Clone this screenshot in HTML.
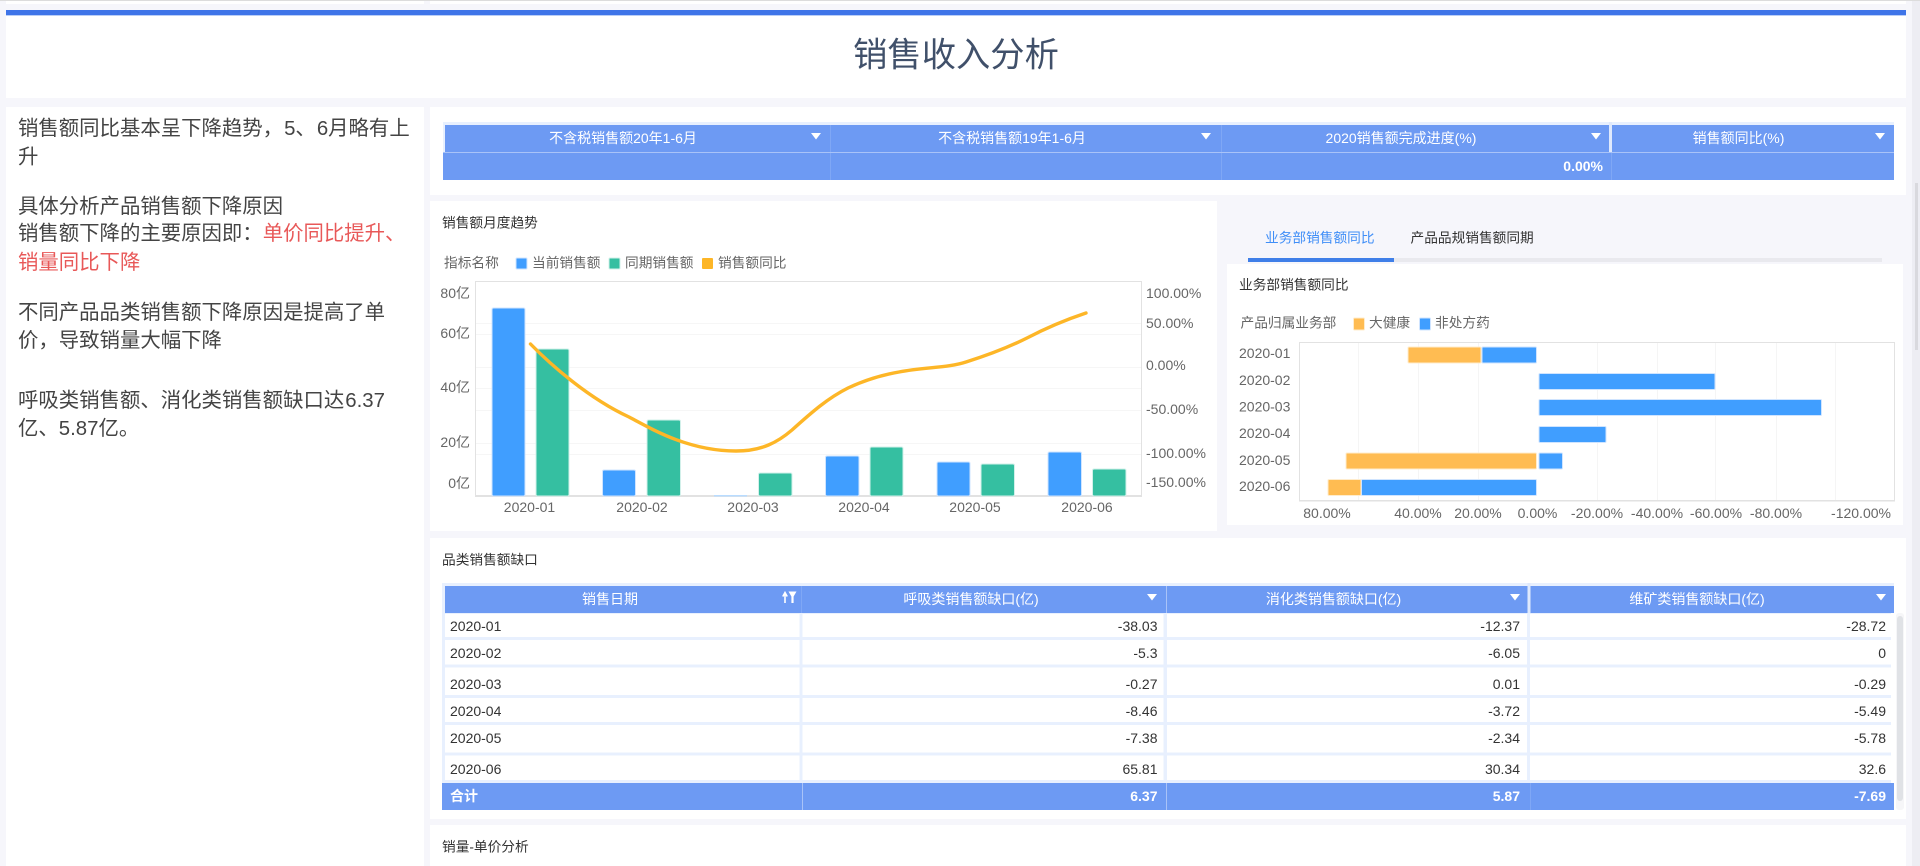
<!DOCTYPE html>
<html lang="zh-CN"><head><meta charset="utf-8"><title>销售收入分析</title>
<style>
html,body{margin:0;padding:0;width:1920px;height:866px;overflow:hidden;background:#f6f6fb}
svg{display:block;position:absolute;left:0;top:0}
text{font-family:"Liberation Sans","Noto Sans CJK SC",sans-serif;font-size:14px;dominant-baseline:central}
.ax{fill:#666}.t{fill:#333}.w{fill:#fff}.wb{fill:#fff;font-weight:700}
.m{text-anchor:middle}.e{text-anchor:end}
.c{font-size:13.7px}
.l{font-size:20.4px;fill:#444}.r{fill:#e85858}
.bb{fill:#409eff;stroke:#cfe4ff;stroke-width:1}
.bg{fill:#35bfa1;stroke:#d2f0ea;stroke-width:1}
.bo{fill:#ffbc52;stroke:#ffeccc;stroke-width:1}
</style></head><body>
<svg width="1920" height="866" viewBox="0 0 1920 866" xmlns="http://www.w3.org/2000/svg">
<rect width="1920" height="866" fill="#f6f6fb"/>
<rect x="1912" y="0" width="8" height="866" fill="#ededf3"/>
<rect x="1915" y="183" width="3" height="167" fill="#d9d9de"/>
<rect x="0" y="0" width="1920" height="1" fill="#dcdcdc"/>
<rect x="6" y="1" width="418" height="3" fill="#fff"/><rect x="430" y="1" width="1476" height="3" fill="#fff"/>

<!-- Title -->
<rect x="6" y="10" width="1900" height="88" fill="#fff"/>
<rect x="6" y="10" width="1900" height="5" fill="#3e74e8"/>
<rect x="6" y="15" width="1900" height="1" fill="#b9cdf6"/>
<text x="956" y="55.5" class="m" style="font-size:34.3px;fill:#40506a">销售收入分析</text>

<!-- Left panel -->
<rect x="6" y="107" width="418" height="759" fill="#fff"/>
<text x="18" y="129" class="l">销售额同比基本呈下降趋势，<tspan dx="1">5、</tspan><tspan dx="1">6月略有上</tspan></text>
<text x="18" y="157.5" class="l">升</text>
<text x="18" y="207" class="l">具体分析产品销售额下降原因</text>
<text x="18" y="234" class="l">销售额下降的主要原因即：<tspan class="r">单价同比提升、</tspan></text>
<text x="18" y="263" class="l r">销量同比下降</text>
<text x="18" y="313" class="l">不同产品品类销售额下降原因是提高了单</text>
<text x="18" y="341" class="l">价，导致销量大幅下降</text>
<text x="18" y="401" class="l">呼吸类销售额、消化类销售额缺口达<tspan dx="1">6.37</tspan></text>
<text x="18" y="429" class="l">亿、5.87亿。</text>

<!-- Summary table -->
<rect x="430" y="107" width="1476" height="88" fill="#fff"/>
<rect x="443" y="122" width="1451" height="3" fill="#e8f0fe"/>
<rect x="445" y="125" width="1449" height="27" fill="#6d9af3"/>
<rect x="443" y="125" width="2" height="27" fill="#e8f0fe"/>
<rect x="443" y="153" width="1451" height="27" fill="#6d9af3"/>
<rect x="443" y="152" width="1451" height="1" fill="#a9c3f8"/>
<rect x="830" y="125" width="1" height="27" fill="#7fa7f5"/><rect x="830" y="153" width="1" height="27" fill="#7fa7f5"/>
<rect x="1221" y="125" width="1" height="27" fill="#7fa7f5"/><rect x="1221" y="153" width="1" height="27" fill="#7fa7f5"/>
<rect x="1609" y="122" width="3" height="30" fill="#dfe9fc"/><rect x="1611" y="153" width="1" height="27" fill="#7fa7f5"/>
<text x="623" y="138" class="w m">不含税销售额20年1-6月</text>
<text x="1012" y="138" class="w m">不含税销售额19年1-6月</text>
<text x="1401" y="138" class="w m">2020销售额完成进度(%)</text>
<text x="1738.5" y="138" class="w m">销售额同比(%)</text>
<polygon points="811,133 821,133 816,139.5" fill="#fff"/>
<polygon points="1201,133 1211,133 1206,139.5" fill="#fff"/>
<polygon points="1591,133 1601,133 1596,139.5" fill="#fff"/>
<polygon points="1875,133 1885,133 1880,139.5" fill="#fff"/>
<text x="1603" y="166" class="wb e">0.00%</text>

<!-- Monthly trend chart -->
<rect x="430" y="201" width="787" height="330" fill="#fff"/>
<text x="442" y="223" class="t c">销售额月度趋势</text>
<text x="444" y="263" class="ax c">指标名称</text>
<rect x="516" y="258" width="11" height="11" rx="1" class="bb"/>
<text x="532" y="263" class="ax c">当前销售额</text>
<rect x="609" y="258" width="11" height="11" rx="1" class="bg"/>
<text x="625" y="263" class="ax c">同期销售额</text>
<rect x="702" y="258" width="11" height="11" rx="1" fill="#fdb627"/>
<text x="718" y="263" class="ax c">销售额同比</text>
<g stroke="#f6f6f6" stroke-width="1">
<path d="M476 323.5H1142M476 334.5H1142M476 367.5H1142M476 388.5H1142M476 410.5H1142M476 443.5H1142M476 454.5H1142"/>
</g>
<path d="M475.5 496V281.5H1141.5V496" fill="none" stroke="#e2e2e2" stroke-width="1"/>
<rect x="475" y="495" width="667" height="2" fill="#e2e2e2"/>
<rect x="492" y="308" width="33" height="188" rx="1.5" class="bb"/>
<rect x="536" y="349" width="33" height="147" rx="1.5" class="bg"/>
<rect x="602.5" y="470" width="33" height="26" rx="1.5" class="bb"/>
<rect x="647" y="420" width="33.5" height="76" rx="1.5" class="bg"/>
<rect x="714" y="495" width="33" height="1.5" fill="#b9dcff"/>
<rect x="758.5" y="473" width="33.5" height="23" rx="1.5" class="bg"/>
<rect x="825.5" y="456" width="33.5" height="40" rx="1.5" class="bb"/>
<rect x="870" y="447" width="33" height="49" rx="1.5" class="bg"/>
<rect x="937" y="462" width="33" height="34" rx="1.5" class="bb"/>
<rect x="981" y="464" width="33.5" height="32" rx="1.5" class="bg"/>
<rect x="1048" y="452" width="33.5" height="44" rx="1.5" class="bb"/>
<rect x="1092.5" y="469" width="33.5" height="27" rx="1.5" class="bg"/>
<path d="M530.5 344C550 364 588 398 629 417C655 431 690 451 736 451C762 451 778 442 792 430C812 412 828 398 848 388C865 380 882 375 899 372C925 367 948 368 966 362C985 356 1005 349 1027 338C1048 327 1068 319 1086 313" fill="none" stroke="#fdb627" stroke-width="3.4" stroke-linecap="round"/>
<g class="ax">
<text x="470" y="293" class="ax e">80亿</text>
<text x="470" y="333" class="ax e">60亿</text>
<text x="470" y="387" class="ax e">40亿</text>
<text x="470" y="442" class="ax e">20亿</text>
<text x="470" y="483" class="ax e">0亿</text>
<text x="1146" y="293" class="ax">100.00%</text>
<text x="1146" y="323" class="ax">50.00%</text>
<text x="1146" y="365" class="ax">0.00%</text>
<text x="1146" y="409" class="ax">-50.00%</text>
<text x="1146" y="453" class="ax">-100.00%</text>
<text x="1146" y="482" class="ax">-150.00%</text>
<text x="529.5" y="507" class="ax m">2020-01</text>
<text x="642" y="507" class="ax m">2020-02</text>
<text x="753" y="507" class="ax m">2020-03</text>
<text x="864" y="507" class="ax m">2020-04</text>
<text x="975" y="507" class="ax m">2020-05</text>
<text x="1087" y="507" class="ax m">2020-06</text>
</g>

<!-- Tabs -->
<text x="1265" y="238" class="c" style="fill:#3f8ef7">业务部销售额同比</text>
<text x="1410.5" y="238" class="t c">产品品规销售额同期</text>
<rect x="1248" y="258" width="634" height="4" fill="#e9e9ee"/>
<rect x="1248" y="258" width="146" height="4" fill="#3f7fe8"/>
<rect x="1227" y="264" width="676" height="261" fill="#fff"/>
<text x="1239" y="285" class="t c">业务部销售额同比</text>
<text x="1240.5" y="323" class="ax c">产品归属业务部</text>
<rect x="1353.5" y="318" width="11" height="12" rx="1" class="bo"/>
<text x="1369" y="323" class="ax c">大健康</text>
<rect x="1419.5" y="318" width="11" height="12" rx="1" class="bb"/>
<text x="1435" y="323" class="ax c">非处方药</text>
<path d="M1358.5 342V500M1418.5 342V500M1478.5 342V500M1597.5 342V500M1657.5 342V500M1715.5 342V500M1776.5 342V500M1835.5 342V500" stroke="#f5f5f5" stroke-width="1"/>
<path d="M1299.5 500V342.5H1894.5V500" fill="none" stroke="#e2e2e2" stroke-width="1"/>
<rect x="1299" y="500" width="596" height="1.5" fill="#e2e2e2"/>
<rect x="1408" y="347" width="73" height="16" rx="1" class="bo"/>
<rect x="1482" y="347" width="54.5" height="16" rx="1" class="bb"/>
<rect x="1539" y="373.5" width="176" height="16" rx="1" class="bb"/>
<rect x="1539" y="399.5" width="282.5" height="16" rx="1" class="bb"/>
<rect x="1539" y="426.5" width="67" height="16" rx="1" class="bb"/>
<rect x="1346" y="453" width="190.5" height="16" rx="1" class="bo"/>
<rect x="1539" y="453" width="23.5" height="16" rx="1" class="bb"/>
<rect x="1328" y="479.5" width="33" height="16" rx="1" class="bo"/>
<rect x="1361.5" y="479.5" width="175" height="16" rx="1" class="bb"/>
<text x="1239" y="353" class="ax">2020-01</text>
<text x="1239" y="380" class="ax">2020-02</text>
<text x="1239" y="406.5" class="ax">2020-03</text>
<text x="1239" y="433" class="ax">2020-04</text>
<text x="1239" y="460" class="ax">2020-05</text>
<text x="1239" y="486" class="ax">2020-06</text>
<text x="1327" y="513" class="ax m">80.00%</text>
<text x="1418" y="513" class="ax m">40.00%</text>
<text x="1478" y="513" class="ax m">20.00%</text>
<text x="1537.5" y="513" class="ax m">0.00%</text>
<text x="1597" y="513" class="ax m">-20.00%</text>
<text x="1657" y="513" class="ax m">-40.00%</text>
<text x="1716" y="513" class="ax m">-60.00%</text>
<text x="1776" y="513" class="ax m">-80.00%</text>
<text x="1861" y="513" class="ax m">-120.00%</text>

<!-- Category table -->
<rect x="430" y="538" width="1476" height="281" fill="#fff"/>
<text x="442" y="560" class="t c">品类销售额缺口</text>
<rect x="442" y="583" width="1452" height="200" fill="#e8f0fe"/>
<rect x="445" y="586" width="1449" height="27" fill="#6d9af3"/>
<rect x="801" y="586" width="1" height="27" fill="#7fa7f5"/><rect x="1166" y="586" width="1" height="27" fill="#a9c3f8"/><rect x="1527.5" y="583" width="3" height="30" fill="#dfe9fc"/>
<g fill="#fff">
<rect x="445" y="614" width="354.5" height="23"/><rect x="802.5" y="614" width="361" height="23"/><rect x="1167" y="614" width="360" height="23"/><rect x="1530" y="614" width="361" height="23"/>
<rect x="445" y="640" width="354.5" height="24.5"/><rect x="802.5" y="640" width="361" height="24.5"/><rect x="1167" y="640" width="360" height="24.5"/><rect x="1530" y="640" width="361" height="24.5"/>
<rect x="445" y="667.5" width="354.5" height="27.5"/><rect x="802.5" y="667.5" width="361" height="27.5"/><rect x="1167" y="667.5" width="360" height="27.5"/><rect x="1530" y="667.5" width="361" height="27.5"/>
<rect x="445" y="698" width="354.5" height="24"/><rect x="802.5" y="698" width="361" height="24"/><rect x="1167" y="698" width="360" height="24"/><rect x="1530" y="698" width="361" height="24"/>
<rect x="445" y="725" width="354.5" height="27.5"/><rect x="802.5" y="725" width="361" height="27.5"/><rect x="1167" y="725" width="360" height="27.5"/><rect x="1530" y="725" width="361" height="27.5"/>
<rect x="445" y="755.5" width="354.5" height="24.5"/><rect x="802.5" y="755.5" width="361" height="24.5"/><rect x="1167" y="755.5" width="360" height="24.5"/><rect x="1530" y="755.5" width="361" height="24.5"/>
</g>
<rect x="1891" y="613" width="3" height="170" fill="#fff"/>
<rect x="442" y="783" width="1452" height="27" fill="#6d9af3"/>
<rect x="802" y="783" width="1" height="27" fill="#a9c3f8"/><rect x="1166" y="783" width="1" height="27" fill="#a9c3f8"/><rect x="1530" y="783" width="1" height="27" fill="#7fa7f5"/>
<rect x="1896" y="613" width="8" height="197" rx="3" fill="#f6f6f8"/>
<rect x="1897" y="616" width="6" height="185" rx="3" fill="#e0e2e6"/>
<text x="610" y="599" class="w m">销售日期</text>
<text x="971" y="599" class="w m">呼吸类销售额缺口(亿)</text>
<text x="1333.5" y="599" class="w m">消化类销售额缺口(亿)</text>
<text x="1697" y="599" class="w m">维矿类销售额缺口(亿)</text>
<path d="M785 603V594M782.8 596.5L785 592.5L787.2 596.5" fill="none" stroke="#fff" stroke-width="1.6"/>
<polygon points="788.5,591.5 796.5,591.5 793.6,596.5 793.6,603 791.4,603 791.4,596.5" fill="#fff"/>
<polygon points="1147,594 1157,594 1152,600.5" fill="#fff"/>
<polygon points="1510,594 1520,594 1515,600.5" fill="#fff"/>
<polygon points="1876,594 1886,594 1881,600.5" fill="#fff"/>
<g class="t">
<text x="450" y="626" class="t">2020-01</text><text x="1157.5" y="626" class="t e">-38.03</text><text x="1520" y="626" class="t e">-12.37</text><text x="1886" y="626" class="t e">-28.72</text>
<text x="450" y="653" class="t">2020-02</text><text x="1157.5" y="653" class="t e">-5.3</text><text x="1520" y="653" class="t e">-6.05</text><text x="1886" y="653" class="t e">0</text>
<text x="450" y="684" class="t">2020-03</text><text x="1157.5" y="684" class="t e">-0.27</text><text x="1520" y="684" class="t e">0.01</text><text x="1886" y="684" class="t e">-0.29</text>
<text x="450" y="711" class="t">2020-04</text><text x="1157.5" y="711" class="t e">-8.46</text><text x="1520" y="711" class="t e">-3.72</text><text x="1886" y="711" class="t e">-5.49</text>
<text x="450" y="738" class="t">2020-05</text><text x="1157.5" y="738" class="t e">-7.38</text><text x="1520" y="738" class="t e">-2.34</text><text x="1886" y="738" class="t e">-5.78</text>
<text x="450" y="769" class="t">2020-06</text><text x="1157.5" y="769" class="t e">65.81</text><text x="1520" y="769" class="t e">30.34</text><text x="1886" y="769" class="t e">32.6</text>
</g>
<text x="450" y="796" class="wb">合计</text><text x="1157.5" y="796" class="wb e">6.37</text><text x="1520" y="796" class="wb e">5.87</text><text x="1886" y="796" class="wb e">-7.69</text>

<!-- Next panel -->
<rect x="430" y="825" width="1476" height="41" fill="#fff"/>
<text x="442" y="847" class="t c">销量-单价分析</text>
</svg>
</body></html>
